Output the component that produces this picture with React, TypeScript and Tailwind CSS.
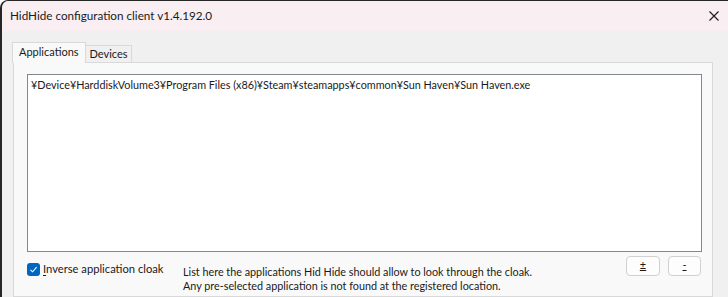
export default function App() {
  return (
    <div className="w-[728px] h-[297px] overflow-hidden bg-white font-['Lato','Noto_Sans',sans-serif] text-[11px] text-[#1a1a1a]">
      <div className="flex h-full flex-col rounded-tl-[8px] border-l-2 border-t border-[#262626] bg-[#f0f0f0]">
        {/* Title bar */}
        <div className="flex h-[30px] shrink-0 items-center justify-between rounded-tl-[7px] bg-[#f9eef2] pl-[8px] pr-[9px]">
          <span className="text-[11.7px] text-[#1a1a1a]">HidHide configuration client v1.4.192.0</span>
          <svg width="10" height="10" viewBox="0 0 10 10" className="mt-[-1px]">
            <path d="M0.5 0.5 L9.5 9.5 M9.5 0.5 L0.5 9.5" stroke="#1a1a1a" strokeWidth="1.1" />
          </svg>
        </div>

        {/* Body */}
        <div className="flex flex-1 flex-col pl-[10px] pr-[15px] pt-[11px]">
          {/* Tabs */}
          <div className="relative z-10 flex h-[20px] items-end">
            <div className="-mb-px flex h-[21px] items-center border border-b-0 border-[#d9d9d9] bg-[#f9f9f9] px-[6px] pb-[1px]">
              Applications
            </div>
            <div className="flex h-[17px] items-center border-r border-t border-[#d9d9d9] bg-[#f0f0f0] pl-[4px] pr-[3px]">
              Devices
            </div>
          </div>

          {/* Panel */}
          <div className="ml-[1px] flex flex-1 flex-col border border-[#d9d9d9] bg-[#f9f9f9] pl-[13px] pr-[10px] pt-[11px]">
            <div className="h-[178px] border border-[#828790] bg-white px-[3px] pt-[2px] text-[10.8px] leading-[16px]">
              ¥Device¥HarddiskVolume3¥Program Files (x86)¥Steam¥steamapps¥common¥Sun Haven¥Sun Haven.exe
            </div>

            <div className="flex items-start pt-[4px]">
              <label className="mt-[5px] flex w-[156px] items-center gap-[3px]">
                <span className="flex h-[13px] w-[13px] items-center justify-center rounded-[3px] bg-[#0067c0]">
                  <svg width="9" height="9" viewBox="0 0 9 9">
                    <path d="M1.5 4.8 L3.6 6.8 L7.6 2.2" fill="none" stroke="white" strokeWidth="1.1" />
                  </svg>
                </span>
                <span className="text-[11.2px]">
                  <span className="underline underline-offset-2">I</span>nverse application cloak
                </span>
              </label>

              <div className="mt-[9px] flex-1 text-[10.8px] leading-[14px]">
                <div>List here the applications Hid Hide should allow to look through the cloak.</div>
                <div>Any pre-selected application is not found at the registered location.</div>
              </div>

              <div className="flex gap-[8px] pr-[1px]">
                <button className="flex h-[20px] w-[34px] items-center justify-center rounded-[4px] border border-[#d0d0d0] bg-[#fdfdfd] pb-[1px]">
                  <span className="underline underline-offset-1">±</span>
                </button>
                <button className="flex h-[20px] w-[33px] items-center justify-center rounded-[4px] border border-[#d0d0d0] bg-[#fdfdfd] pb-[1px]">
                  <span className="underline underline-offset-1">-</span>
                </button>
              </div>
            </div>
          </div>
        </div>
      </div>
    </div>
  );
}
